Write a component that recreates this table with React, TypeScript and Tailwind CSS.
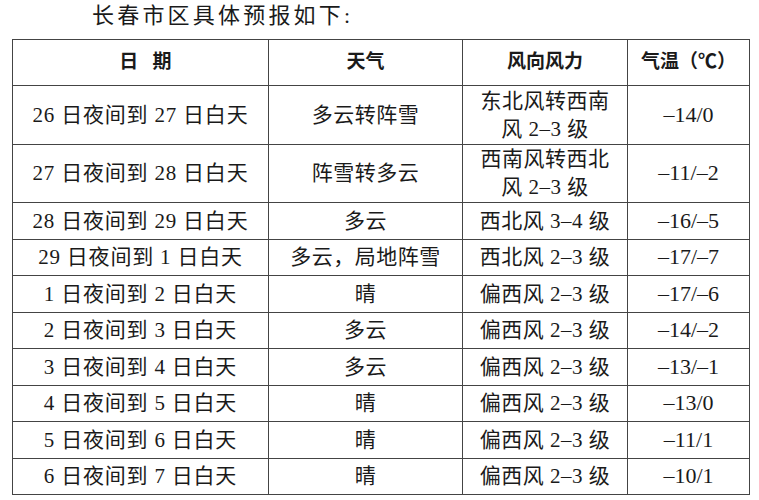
import React from "react";

const rows: { d: string; w: string; f: string[]; t: string; tall?: boolean }[] = [
  { d: "26 日夜间到 27 日白天", w: "多云转阵雪", f: ["东北风转西南", "风 2–3 级"], t: "–14/0", tall: true },
  { d: "27 日夜间到 28 日白天", w: "阵雪转多云", f: ["西南风转西北", "风 2–3 级"], t: "–11/–2", tall: true },
  { d: "28 日夜间到 29 日白天", w: "多云", f: ["西北风 3–4 级"], t: "–16/–5" },
  { d: "29 日夜间到 1 日白天", w: "多云，局地阵雪", f: ["西北风 2–3 级"], t: "–17/–7" },
  { d: "1 日夜间到 2 日白天", w: "晴", f: ["偏西风 2–3 级"], t: "–17/–6" },
  { d: "2 日夜间到 3 日白天", w: "多云", f: ["偏西风 2–3 级"], t: "–14/–2" },
  { d: "3 日夜间到 4 日白天", w: "多云", f: ["偏西风 2–3 级"], t: "–13/–1" },
  { d: "4 日夜间到 5 日白天", w: "晴", f: ["偏西风 2–3 级"], t: "–13/0" },
  { d: "5 日夜间到 6 日白天", w: "晴", f: ["偏西风 2–3 级"], t: "–11/1" },
  { d: "6 日夜间到 7 日白天", w: "晴", f: ["偏西风 2–3 级"], t: "–10/1" },
];

const cell = "border border-[#444444] text-center align-middle p-0";

export default function App() {
  return (
    <div
      className="w-[759px] h-[500px] bg-white text-[#1a1a1a] overflow-hidden"
      style={{ fontFamily: '"Liberation Serif", "Noto Sans CJK SC", serif' }}
    >
      <div className="h-[39px] pl-[92px] pt-[1px] text-[22px] leading-[30px] tracking-[3.2px]">
        长春市区具体预报如下:
      </div>
      <table className="ml-[12px] w-[737px] border-collapse table-fixed">
        <colgroup>
          <col className="w-[256px]" />
          <col className="w-[194px]" />
          <col className="w-[165px]" />
          <col className="w-[122px]" />
        </colgroup>
        <thead>
          <tr className="h-[46px]">
            <th className={`${cell} text-[19px] font-bold`}>
              <span className="pl-[10px]">日&nbsp;&nbsp;&nbsp;期</span>
            </th>
            <th className={`${cell} text-[19px] font-bold`}>天气</th>
            <th className={`${cell} text-[19px] font-bold`}>风向风力</th>
            <th className={`${cell} text-[19px] font-bold`}>气温（℃）</th>
          </tr>
        </thead>
        <tbody className="text-[21px] leading-[28px]">
          {rows.map((r, i) => (
            <tr key={i} className={r.tall ? "h-[58.5px]" : "h-[36.5px]"}>
              <td className={`${cell} tracking-[0.8px]`}>{r.d}</td>
              <td className={`${cell} tracking-[0.5px]`}>{r.w}</td>
              <td className={`${cell} tracking-[0.5px]`}>
                {r.f.map((l, j) => (
                  <div key={j}>{l}</div>
                ))}
              </td>
              <td className={`${cell} text-[22px]`}>{r.t}</td>
            </tr>
          ))}
        </tbody>
      </table>
    </div>
  );
}
